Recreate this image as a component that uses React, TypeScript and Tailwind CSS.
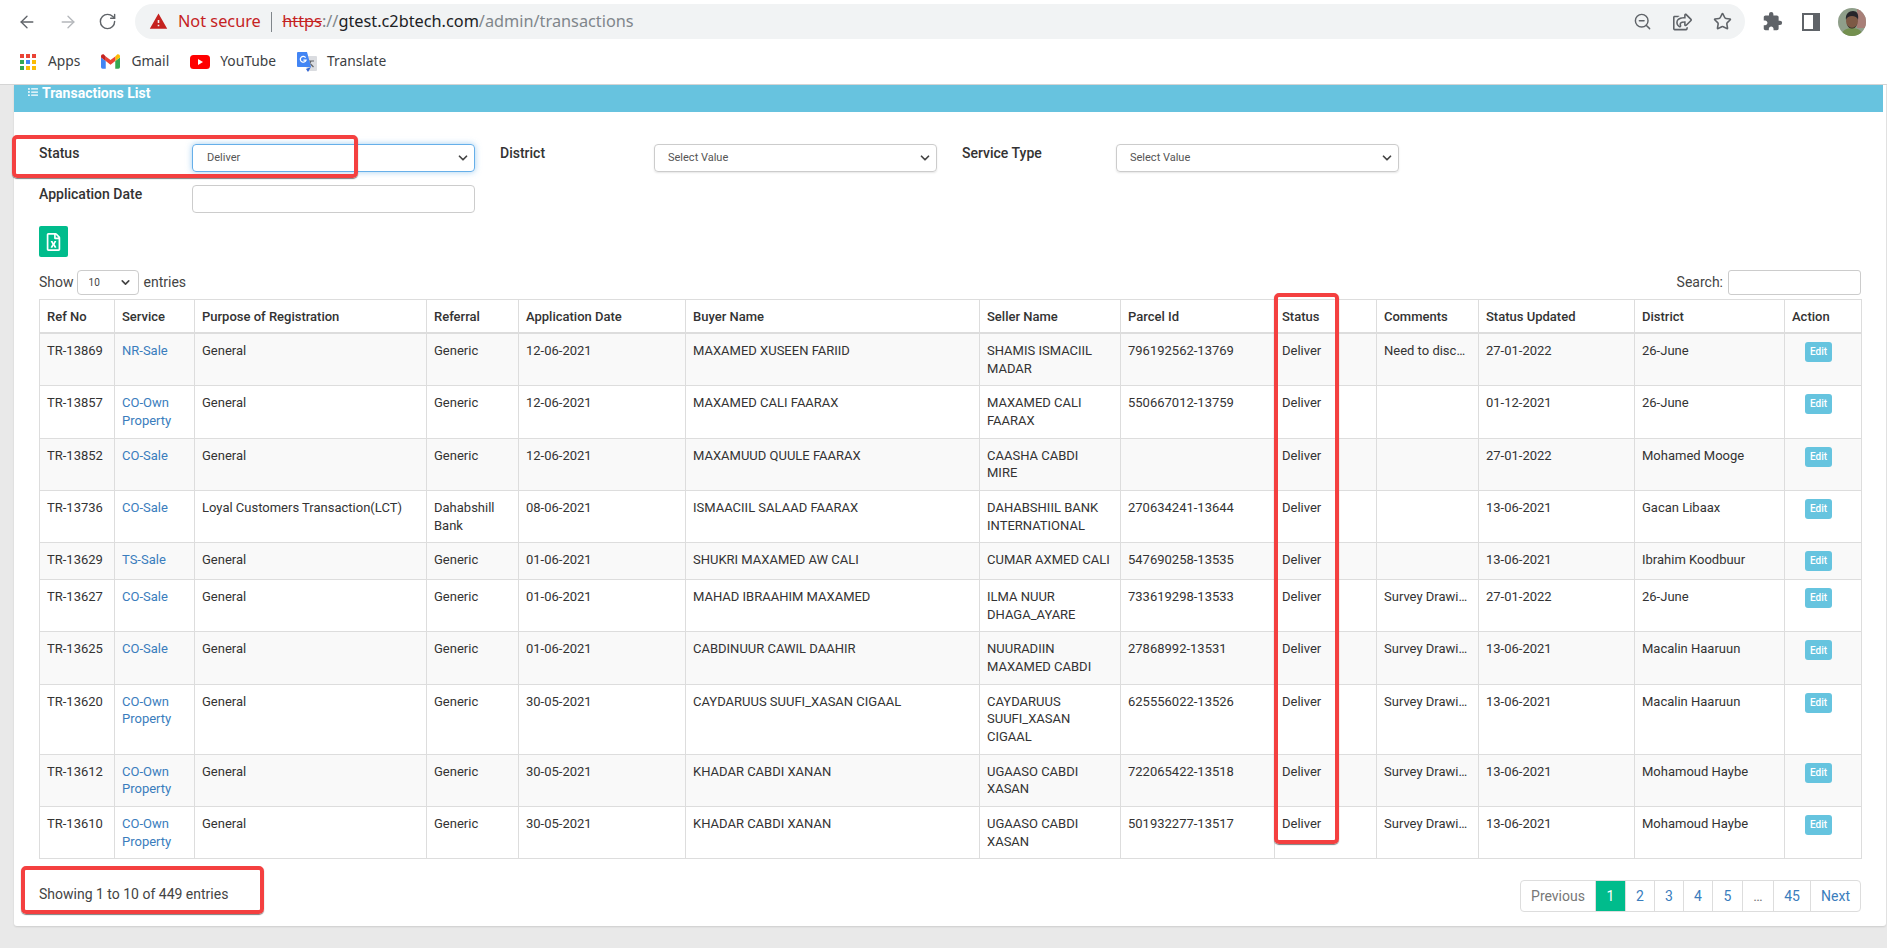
import { ArrowLeft, ArrowRight, RotateCw, ZoomOut, Star, ChevronDown } from "lucide-react"
import { MdWarning, MdExtension } from "react-icons/md"
import { FaRegShareSquare, FaRegFileExcel, FaListUl } from "react-icons/fa"

type Row = {
  ref: string
  service: string
  purpose: string
  referral: string
  date: string
  buyer: string
  seller: string
  parcel: string
  comments: string
  updated: string
  district: string
}

const ROWS: Row[] = [
  { ref: "TR-13869", service: "NR-Sale", purpose: "General", referral: "Generic", date: "12-06-2021", buyer: "MAXAMED XUSEEN FARIID", seller: "SHAMIS ISMACIIL MADAR", parcel: "796192562-13769", comments: "Need to discuss", updated: "27-01-2022", district: "26-June" },
  { ref: "TR-13857", service: "CO-Own Property", purpose: "General", referral: "Generic", date: "12-06-2021", buyer: "MAXAMED CALI FAARAX", seller: "MAXAMED CALI FAARAX", parcel: "550667012-13759", comments: "", updated: "01-12-2021", district: "26-June" },
  { ref: "TR-13852", service: "CO-Sale", purpose: "General", referral: "Generic", date: "12-06-2021", buyer: "MAXAMUUD QUULE FAARAX", seller: "CAASHA CABDI\nMIRE", parcel: "", comments: "", updated: "27-01-2022", district: "Mohamed Mooge" },
  { ref: "TR-13736", service: "CO-Sale", purpose: "Loyal Customers Transaction(LCT)", referral: "Dahabshill Bank", date: "08-06-2021", buyer: "ISMAACIIL SALAAD FAARAX", seller: "DAHABSHIIL BANK INTERNATIONAL", parcel: "270634241-13644", comments: "", updated: "13-06-2021", district: "Gacan Libaax" },
  { ref: "TR-13629", service: "TS-Sale", purpose: "General", referral: "Generic", date: "01-06-2021", buyer: "SHUKRI MAXAMED AW CALI", seller: "CUMAR AXMED CALI", parcel: "547690258-13535", comments: "", updated: "13-06-2021", district: "Ibrahim Koodbuur" },
  { ref: "TR-13627", service: "CO-Sale", purpose: "General", referral: "Generic", date: "01-06-2021", buyer: "MAHAD IBRAAHIM MAXAMED", seller: "ILMA NUUR DHAGA_AYARE", parcel: "733619298-13533", comments: "Survey Drawing", updated: "27-01-2022", district: "26-June" },
  { ref: "TR-13625", service: "CO-Sale", purpose: "General", referral: "Generic", date: "01-06-2021", buyer: "CABDINUUR CAWIL DAAHIR", seller: "NUURADIIN MAXAMED CABDI", parcel: "27868992-13531", comments: "Survey Drawing", updated: "13-06-2021", district: "Macalin Haaruun" },
  { ref: "TR-13620", service: "CO-Own Property", purpose: "General", referral: "Generic", date: "30-05-2021", buyer: "CAYDARUUS SUUFI_XASAN CIGAAL", seller: "CAYDARUUS SUUFI_XASAN CIGAAL", parcel: "625556022-13526", comments: "Survey Drawing", updated: "13-06-2021", district: "Macalin Haaruun" },
  { ref: "TR-13612", service: "CO-Own Property", purpose: "General", referral: "Generic", date: "30-05-2021", buyer: "KHADAR CABDI XANAN", seller: "UGAASO CABDI XASAN", parcel: "722065422-13518", comments: "Survey Drawing", updated: "13-06-2021", district: "Mohamoud Haybe" },
  { ref: "TR-13610", service: "CO-Own Property", purpose: "General", referral: "Generic", date: "30-05-2021", buyer: "KHADAR CABDI XANAN", seller: "UGAASO CABDI XASAN", parcel: "501932277-13517", comments: "Survey Drawing", updated: "13-06-2021", district: "Mohamoud Haybe" },
]

const COLUMNS = [
  { label: "Ref No", width: "w-[75px]" },
  { label: "Service", width: "w-[80px]" },
  { label: "Purpose of Registration", width: "w-[232px]" },
  { label: "Referral", width: "w-[92px]" },
  { label: "Application Date", width: "w-[167px]" },
  { label: "Buyer Name", width: "w-[294px]" },
  { label: "Seller Name", width: "w-[141px]" },
  { label: "Parcel Id", width: "w-[154px]" },
  { label: "Status", width: "w-[102px]" },
  { label: "Comments", width: "w-[102px]" },
  { label: "Status Updated", width: "w-[156px]" },
  { label: "District", width: "w-[150px]" },
  { label: "Action", width: "w-[77px]" },
]

const APP_DOTS = [
  "bg-[#ea4335]", "bg-[#ea4335]", "bg-[#ea4335]",
  "bg-[#34a853]", "bg-[#4285f4]", "bg-[#fbbc04]",
  "bg-[#34a853]", "bg-[#fbbc04]", "bg-[#fbbc04]",
]

const PAGES = [
  { label: "Previous", width: "w-[75px]", tone: "text-[#777]" },
  { label: "1", width: "w-[30px]", tone: "text-white bg-[#00bc8c]" },
  { label: "2", width: "w-[29px]", tone: "text-[#3a7dbd]" },
  { label: "3", width: "w-[29px]", tone: "text-[#3a7dbd]" },
  { label: "4", width: "w-[29px]", tone: "text-[#3a7dbd]" },
  { label: "5", width: "w-[30px]", tone: "text-[#3a7dbd]" },
  { label: "…", width: "w-[31px]", tone: "text-[#777]" },
  { label: "45", width: "w-[37px]", tone: "text-[#3a7dbd]" },
  { label: "Next", width: "w-[49px]", tone: "text-[#3a7dbd]" },
]

function GmailIcon() {
  return (
    <svg viewBox="0 0 24 18" className="h-[15px] w-[19px]">
      <path fill="#4285F4" d="M2 18h4V8.5L0 4v12a2 2 0 0 0 2 2z" />
      <path fill="#34A853" d="M18 18h4a2 2 0 0 0 2-2V4l-6 4.5z" />
      <path fill="#FBBC04" d="M18 2.7v5.8L24 4V2.4c0-2-2.3-3.2-3.9-2z" />
      <path fill="#EA4335" d="M6 8.5V2.7l6 4.5 6-4.5v5.8l-6 4.5z" />
      <path fill="#C5221F" d="M0 2.4V4l6 4.5V2.7L3.9.4C2.3-.8 0 .4 0 2.4z" />
    </svg>
  )
}

function YouTubeIcon() {
  return (
    <svg viewBox="0 0 20 14" className="h-[14px] w-[20px]">
      <rect width="20" height="14" rx="3.5" fill="#f00" />
      <path d="M8 4l5 3-5 3z" fill="#fff" />
    </svg>
  )
}

function TranslateIcon() {
  return (
    <svg viewBox="0 0 20 20" className="h-[20px] w-[20px]">
      <path d="M8 4h11a1 1 0 0 1 1 1v13a1 1 0 0 1-1 1H10z" fill="#dadce0" />
      <path d="M14 9l-3 6M12 9h5M13.5 12l3 3" stroke="#5f6368" strokeWidth="1.2" fill="none" />
      <path d="M1 0h9l4 15H1a1 1 0 0 1-1-1V1a1 1 0 0 1 1-1z" fill="#4285f4" />
      <path d="M9 17l2 3 3-5z" fill="#3367d6" />
      <path d="M8.6 5.6A2.9 2.9 0 1 0 9 8.2H6.4" stroke="#fff" strokeWidth="1.3" fill="none" />
    </svg>
  )
}

function SidePanelIcon() {
  return (
    <svg viewBox="0 0 18 18" className="h-[18px] w-[18px]">
      <path fillRule="evenodd" fill="#5f6368" d="M0 0h18v18H0zM2 2v14h9V2z" />
    </svg>
  )
}

function Avatar() {
  return (
    <svg viewBox="0 0 28 28" className="h-[28px] w-[28px] rounded-full">
      <rect width="28" height="28" fill="#8f9f8a" />
      <rect x="19" width="9" height="20" fill="#a87f78" />
      <path d="M3 28c1-6 6-8 11-8s10 2 11 8z" fill="#74904f" />
      <ellipse cx="14" cy="13" rx="6" ry="7" fill="#7d5a45" />
      <path d="M8 12c-1-6 3-9 7-9s6 3 5 9c-1-3-3-4-6-4s-5 1-6 4z" fill="#26252a" />
      <path d="M9 16c2 5 8 5 10 0-1 6-9 6-10 0z" fill="#2c2622" />
    </svg>
  )
}

function EditButton() {
  return (
    <span className="ml-[13px] flex h-[20px] w-[27px] items-center justify-center rounded-[3px] bg-[#66c4df] text-[10px] font-medium text-white">
      Edit
    </span>
  )
}

function RedBox({ className }: { className: string }) {
  return (
    <div
      className={`pointer-events-none absolute rounded-[5px] border-[4px] border-[#f44040] shadow-[0_1px_1px_rgba(0,0,0,0.5)] ${className}`}
    />
  )
}

function SelectBox({ value, className }: { value: string; className: string }) {
  return (
    <div className="relative">
      <select
        defaultValue={value}
        className={`h-[28px] appearance-none rounded-[4px] border text-[11px] text-[#555] ${className}`}
      >
        <option>{value}</option>
      </select>
      <ChevronDown className="pointer-events-none absolute right-[5px] top-[7px] h-[14px] w-[14px] text-[#444]" strokeWidth={3} />
    </div>
  )
}

export default function App() {
  return (
    <div className="relative flex h-[948px] flex-col overflow-hidden bg-[#e9e9e9] font-[Roboto,sans-serif] text-[#333]">
      {/* Browser toolbar */}
      <header className="flex h-[42px] items-center bg-white pl-[17px] pt-[1px] font-['Noto_Sans',sans-serif] text-[#5f6368]">
        <ArrowLeft className="h-[20px] w-[20px]" strokeWidth={1.6} />
        <ArrowRight className="ml-[21px] h-[20px] w-[20px] text-[#b4b7bb]" strokeWidth={1.6} />
        <RotateCw className="ml-[20px] h-[19px] w-[19px]" strokeWidth={1.8} />
        <div className="ml-[18px] flex h-[35px] flex-1 items-center rounded-full bg-[#f1f3f4] pl-[14px] pr-[13px]">
          <MdWarning className="h-[19px] w-[19px] text-[#c5221f]" />
          <span className="ml-[10px] text-[16.3px] text-[#c5221f]">Not secure</span>
          <span className="mx-[10px] h-[20px] w-[1.5px] bg-[#80868b]" />
          <span className="text-[16.3px] text-[#80868b]">
            <span className="text-[#c5221f] line-through">https</span>
            ://
            <span className="text-[#202124]">gtest.c2btech.com</span>
            /admin/transactions
          </span>
          <ZoomOut className="ml-auto h-[19px] w-[19px]" strokeWidth={1.8} />
          <FaRegShareSquare className="ml-[21px] h-[18px] w-[19px]" />
          <Star className="ml-[21px] h-[19px] w-[19px]" strokeWidth={2} />
        </div>
        <div className="flex w-[142px] items-center pl-[17px]">
          <MdExtension className="h-[21px] w-[21px]" />
          <div className="ml-[19px]">
            <SidePanelIcon />
          </div>
          <div className="ml-[18px]">
            <Avatar />
          </div>
        </div>
      </header>

      {/* Bookmarks */}
      <nav className="flex h-[43px] items-center border-b border-[#d5d5d5] bg-white pb-[3px] pl-[20px] font-['Noto_Sans',sans-serif] text-[13.8px] text-[#3c4043]">
        <div className="grid grid-cols-3 gap-[2px]">
          {APP_DOTS.map((dot, i) => (
            <span key={i} className={`h-[4px] w-[4px] ${dot}`} />
          ))}
        </div>
        <span className="ml-[12px]">Apps</span>
        <div className="ml-[21px]">
          <GmailIcon />
        </div>
        <span className="ml-[11px]">Gmail</span>
        <div className="ml-[21px]">
          <YouTubeIcon />
        </div>
        <span className="ml-[10px]">YouTube</span>
        <div className="ml-[21px]">
          <TranslateIcon />
        </div>
        <span className="ml-[10px]">Translate</span>
      </nav>

      {/* Page */}
      <main className="flex-1 pl-[14px] pr-[1px]">
        <section className="h-[841px] rounded-b-[3px] bg-white shadow-[0_1px_2px_rgba(0,0,0,0.12)]">
          <div className="mr-[3px] flex h-[27px] items-start bg-[#67c3df] pl-[14px] text-white">
            <FaListUl className="mt-[2px] h-[10px] w-[10px]" />
            <span className="ml-[4px] text-[14px] font-bold leading-[17px]">Transactions List</span>
          </div>

          <div className="pl-[25px] pr-[25px]">
            {/* Filters */}
            <div className="flex pt-[32px]">
              <label className="w-[153px] text-[14px] font-medium leading-[18px]">Status</label>
              <SelectBox
                value="Deliver"
                className="w-[283px] border-[#66afe9] pl-[14px] shadow-[0_0_6px_rgba(102,175,233,0.6)]"
              />
              <label className="ml-[25px] w-[154px] text-[14px] font-medium leading-[18px]">District</label>
              <SelectBox value="Select Value" className="w-[283px] border-[#ccc] pl-[13px] shadow-[0_1px_2px_rgba(0,0,0,0.1)]" />
              <label className="ml-[25px] w-[154px] text-[14px] font-medium leading-[18px]">Service Type</label>
              <SelectBox value="Select Value" className="w-[283px] border-[#ccc] pl-[13px] shadow-[0_1px_2px_rgba(0,0,0,0.1)]" />
            </div>
            <div className="mt-[13px] flex">
              <label className="w-[153px] text-[14px] font-medium leading-[18px]">Application Date</label>
              <input className="h-[28px] w-[283px] rounded-[4px] border border-[#ccc]" />
            </div>

            <button className="mt-[13px] flex h-[31px] w-[29px] items-center justify-center rounded-[2px] bg-[#00bc8c] text-white">
              <FaRegFileExcel className="h-[18px] w-[15px]" />
            </button>

            {/* Table controls */}
            <div className="mt-[13px] flex h-[25px] items-center text-[14px] text-[#444]">
              <span>Show</span>
              <div className="relative ml-[3px]">
                <select className="h-[25px] w-[62px] appearance-none rounded-[4px] border border-[#ccc] pl-[11px] text-[10px]">
                  <option>10</option>
                </select>
                <ChevronDown className="pointer-events-none absolute right-[7px] top-[6px] h-[13px] w-[13px] text-[#444]" strokeWidth={3} />
              </div>
              <span className="ml-[5px]">entries</span>
              <span className="ml-auto">Search:</span>
              <input className="ml-[5px] h-[25px] w-[133px] rounded-[3px] border border-[#ccc]" />
            </div>

            <table className="mt-[4px] w-[1822px] table-fixed border-collapse text-[13px] leading-[17.65px]">
              <thead>
                <tr>
                  {COLUMNS.map((col) => (
                    <th
                      key={col.label}
                      className={`${col.width} border border-b-2 border-[#ddd] px-[7px] pb-[6px] pt-[8px] text-left align-bottom font-medium`}
                    >
                      {col.label}
                    </th>
                  ))}
                </tr>
              </thead>
              <tbody>
                {ROWS.map((row, i) => (
                  <tr key={row.ref} className={i % 2 === 0 ? "bg-[#f9f9f9]" : "bg-white"}>
                    <td className="border border-[#ddd] px-[7px] py-[8px] align-top">{row.ref}</td>
                    <td className="border border-[#ddd] px-[7px] py-[8px] align-top text-[#3a7dbd]">{row.service}</td>
                    <td className="border border-[#ddd] px-[7px] py-[8px] align-top">{row.purpose}</td>
                    <td className="border border-[#ddd] px-[7px] py-[8px] align-top">{row.referral}</td>
                    <td className="border border-[#ddd] px-[7px] py-[8px] align-top">{row.date}</td>
                    <td className="border border-[#ddd] px-[7px] py-[8px] align-top">{row.buyer}</td>
                    <td className="whitespace-pre-line border border-[#ddd] px-[7px] py-[8px] align-top">{row.seller}</td>
                    <td className="border border-[#ddd] px-[7px] py-[8px] align-top">{row.parcel}</td>
                    <td className="border border-[#ddd] px-[7px] py-[8px] align-top">Deliver</td>
                    <td className="truncate border border-[#ddd] px-[7px] py-[8px] align-top">{row.comments}</td>
                    <td className="border border-[#ddd] px-[7px] py-[8px] align-top">{row.updated}</td>
                    <td className="border border-[#ddd] px-[7px] py-[8px] align-top">{row.district}</td>
                    <td className="border border-[#ddd] px-[7px] py-[8px] align-top">
                      <EditButton />
                    </td>
                  </tr>
                ))}
              </tbody>
            </table>

            {/* Footer */}
            <div className="mt-[21px] flex items-start">
              <span className="pt-[4px] text-[14px] leading-[20px] text-[#444]">Showing 1 to 10 of 449 entries</span>
              <div className="ml-auto flex h-[32px] overflow-hidden rounded-[4px] border border-[#ddd] text-[14px]">
                {PAGES.map((page) => (
                  <span
                    key={page.label}
                    className={`${page.width} flex items-center justify-center border-r border-[#ddd] last:border-r-0 ${page.tone}`}
                  >
                    {page.label}
                  </span>
                ))}
              </div>
            </div>
          </div>
        </section>
      </main>

      {/* Review annotations */}
      <RedBox className="left-[12px] top-[135px] h-[43px] w-[346px]" />
      <RedBox className="left-[1274px] top-[293px] h-[551px] w-[65px]" />
      <RedBox className="left-[21px] top-[866px] h-[48px] w-[243px]" />
    </div>
  )
}
